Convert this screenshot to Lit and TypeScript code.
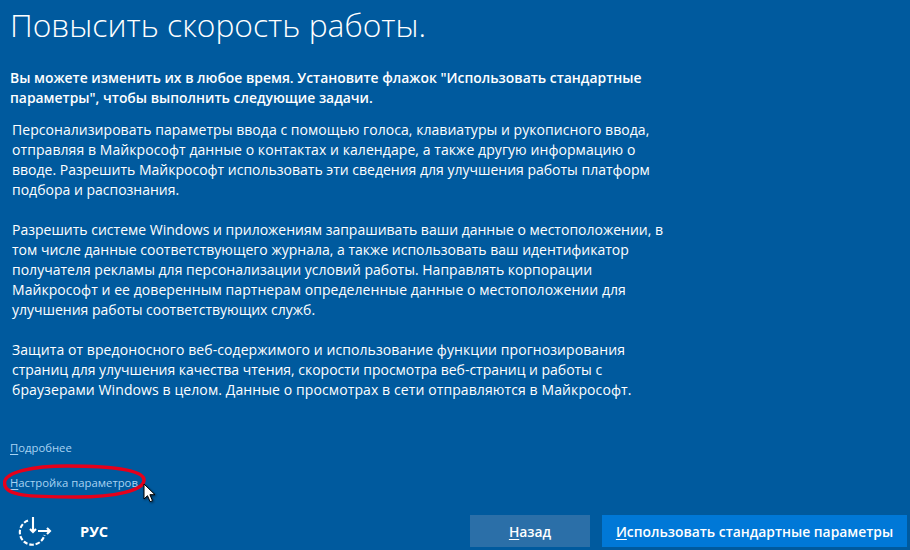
import { LitElement, html, css } from "lit";
import { customElement } from "lit/decorators.js";

type Line = [string, number];

const PARAGRAPHS: Line[][] = [
  [
    ["Персонализировать параметры ввода с помощью голоса, клавиатуры и рукописного ввода,", 0.05],
    ["отправляя в Майкрософт данные о контактах и календаре, а также другую информацию о", 0.07],
    ["вводе. Разрешить Майкрософт использовать эти сведения для улучшения работы платформ", 0],
    ["подбора и распознания.", 0],
  ],
  [
    ["Разрешить системе Windows и приложениям запрашивать ваши данные о местоположении, в", 0],
    ["том числе данные соответствующего журнала, а также использовать ваш идентификатор", 0],
    ["получателя рекламы для персонализации условий работы. Направлять корпорации", 0.01],
    ["Майкрософт и ее доверенным партнерам определенные данные о местоположении для", 0.06],
    ["улучшения работы соответствующих служб.", 0],
  ],
  [
    ["Защита от вредоносного веб-содержимого и использование функции прогнозирования", 0.08],
    ["страниц для улучшения качества чтения, скорости просмотра веб-страниц и работы с", -0.02],
    ["браузерами Windows в целом. Данные о просмотрах в сети отправляются в Майкрософт.", 0.1],
  ],
];

@customElement("app-root")
export class AppRoot extends LitElement {
  static styles = css`
    :host { display: block; width: 910px; height: 550px; }
    .page { box-sizing: border-box; width: 910px; height: 550px; background: #005a9e; color: #fff; font-family: "Open Sans", "Noto Sans", sans-serif; display: flex; flex-direction: column; padding: 0 0 0 10px; overflow: hidden; position: relative; }
    h1 { margin: 0; font-size: 31.8px; font-weight: 300; line-height: 50px; white-space: nowrap; }
    .lead { margin: 18px 0 0; font-size: 13.9px; font-weight: 600; line-height: 20px; white-space: nowrap; }
    .paras { display: flex; flex-direction: column; gap: 20px; margin: 12px 0 0 2px; }
    .body { font-size: 14px; line-height: 20px; margin: 0; white-space: nowrap; }
    .line { display: block; }
    .links { position: absolute; left: 10px; top: 438px; display: flex; flex-direction: column; gap: 15px; font-size: 11.3px; line-height: 20px; color: #a9d3f2; }
    .links span { white-space: nowrap; }
    u { text-underline-offset: 2px; }
    .oval { position: absolute; left: 3px; top: 464px; width: 144px; height: 37px; }
    .cursor { position: absolute; left: 143px; top: 483px; width: 13px; height: 20px; filter: drop-shadow(1px 1px 1px rgba(0, 0, 0, 0.5)); }
    .foot { position: absolute; left: 0; right: 0; top: 515px; height: 32px; display: flex; align-items: center; }
    .lang-icon { margin-left: 18px; width: 34px; height: 32px; }
    .lang { margin-left: 28px; font-size: 14.6px; font-weight: 700; }
    .btns { margin-left: auto; margin-right: 3px; display: flex; gap: 12px; }
    .btn { height: 32px; display: flex; align-items: center; justify-content: center; font-size: 13.85px; font-weight: 600; color: #fff; white-space: nowrap; }
    .back { width: 120px; background: #2b6fa8; }
    .primary { width: 305px; background: #0078d7; }
  `;

  render() {
    return html`<div class="page">
      <h1>Повысить скорость работы.</h1>
      <p class="lead">Вы можете изменить их в любое время. Установите флажок "Использовать стандартные<br />параметры", чтобы выполнить следующие задачи.</p>
      <div class="paras">
        ${PARAGRAPHS.map(
          (p) => html`<p class="body">${p.map(
            ([t, ls]) => html`<span class="line" style="letter-spacing:${ls}px">${t}</span>`
          )}</p>`
        )}
      </div>
      <div class="links"><span><u>П</u>одробнее</span><span><u>Н</u>астройка параметров</span></div>
      <svg class="oval" viewBox="0 0 144 37"><path d="M1.500 19C1.500 8 30 2 64 2C110 2 141 6 141 16C141 27 110 33 74 33C25 33 1.500 32 1.500 19Z" fill="none" stroke="#e6001a" stroke-width="3.500"/></svg>
      <svg class="cursor" viewBox="0 0 13 20"><path d="M1 1v15l3.500-3.300 2.600 6 2.400-1-2.600-6H12z" fill="#fff" stroke="#000" stroke-width="1"/></svg>
      <div class="foot">
        <svg class="lang-icon" viewBox="0 0 34 32" fill="none" stroke="#fff" stroke-width="2.100"><path d="M10 5.500A12.500 12.500 0 1 0 26.500 20" stroke-dasharray="4.500 1.800"/><path d="M15 2v15M12 14l3 3 3-3M20 16h12M29 13l3 3-3 3"/></svg>
        <span class="lang">РУС</span>
        <div class="btns"><div class="btn back"><span><u>Н</u>азад</span></div><div class="btn primary"><span><u>И</u>спользовать стандартные параметры</span></div></div>
      </div>
    </div>`;
  }
}
